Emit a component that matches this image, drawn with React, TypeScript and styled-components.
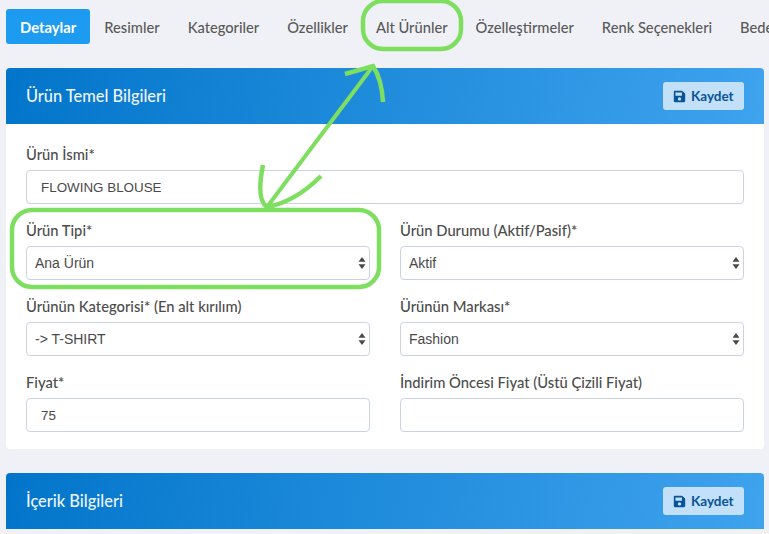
import React from 'react';
import styled, { createGlobalStyle } from 'styled-components';
import { FaSave } from 'react-icons/fa';

const GlobalStyle = createGlobalStyle`
  html, body {
    margin: 0;
    height: 100%;
    overflow: hidden;
    background: #f0f1f6;
  }
  * {
    box-sizing: border-box;
  }
`;

const Page = styled.div`
  position: relative;
  width: 769px;
  height: 534px;
  overflow: hidden;
  padding: 9px 5px 0 6px;
  font-family: Lato, 'Noto Sans', sans-serif;
  color: #4a4a4a;
`;

const Tabs = styled.nav`
  display: flex;
  height: 35px;
  margin-bottom: 24px;
  white-space: nowrap;
`;

const Tab = styled.div<{ $active?: boolean }>`
  flex-shrink: 0;
  display: flex;
  align-items: center;
  height: 35px;
  padding: 0 14px;
  border-radius: 3px;
  font-size: ${(p) => (p.$active ? 14.8 : 14.7)}px;
  font-weight: ${(p) => (p.$active ? 700 : 500)};
  color: ${(p) => (p.$active ? '#fff' : '#595959')};
  background: ${(p) => (p.$active ? '#1d9bf0' : 'transparent')};
`;

const Card = styled.section`
  background: #fff;
  border-radius: 4px;
  margin-bottom: 24px;
`;

const CardHeader = styled.header`
  display: flex;
  align-items: center;
  justify-content: space-between;
  height: 56px;
  padding: 0 20px;
  border-radius: 4px 4px 0 0;
  background: linear-gradient(100deg, #0275ca 0%, #3fa3ee 100%);
`;

const CardTitle = styled.h2`
  margin: -2px 0 0;
  font-size: 16.4px;
  font-weight: 500;
  color: #eef6fd;
`;

const SaveButton = styled.button`
  display: flex;
  align-items: center;
  gap: 5px;
  width: 81px;
  height: 28px;
  padding: 0 10px;
  border: 0;
  border-radius: 3px;
  background: #c3e0f9;
  color: #08549a;
  font-family: inherit;
  font-size: 13.5px;
  font-weight: 700;
`;

const Form = styled.div`
  display: grid;
  grid-template-columns: 344px 344px;
  column-gap: 30px;
  row-gap: 20px;
  padding: 24px 20px 17px;
`;

const Field = styled.div<{ $wide?: boolean }>`
  grid-column: ${(p) => (p.$wide ? '1 / -1' : 'auto')};
`;

const FieldLabel = styled.label`
  display: block;
  height: 22px;
  line-height: 12px;
  font-size: 14.75px;
  font-weight: 500;
  color: #4c4c4c;
  white-space: nowrap;
`;

const SelectBox = styled.div`
  display: flex;
  align-items: center;
  justify-content: space-between;
  height: 34px;
  padding: 0 3px 0 8px;
  border: 1px solid #ccd2e0;
  border-radius: 4px;
  background: #fff;
  font-family: 'Liberation Sans', Arial, sans-serif;
  font-size: 14px;
  color: #4a4a4a;
`;

const TextBox = styled(SelectBox)`
  padding: 1px 3px 0 14px;
  font-size: 13.4px;
`;

const Overlay = styled.svg`
  position: absolute;
  top: 0;
  left: 0;
  pointer-events: none;
`;

const SelectArrows = () => (
  <svg width="8" height="12" viewBox="0 0 8 12" fill="#4a4a4a">
    <path d="M4 0 L7.5 4.8 H0.5 Z" />
    <path d="M4 12 L7.5 7.2 H0.5 Z" />
  </svg>
);

const tabNames = ['Resimler', 'Kategoriler', 'Özellikler', 'Alt Ürünler', 'Özelleştirmeler', 'Renk Seçenekleri', 'Beden'];

const App = () => {
  return (
    <Page>
      <GlobalStyle />
      <Tabs>
        <Tab $active>Detaylar</Tab>
        {tabNames.map((name) => (
          <Tab key={name}>{name}</Tab>
        ))}
      </Tabs>

      <Card>
        <CardHeader>
          <CardTitle>Ürün Temel Bilgileri</CardTitle>
          <SaveButton>
            <FaSave size={13} />
            Kaydet
          </SaveButton>
        </CardHeader>
        <Form>
          <Field $wide>
            <FieldLabel>Ürün İsmi*</FieldLabel>
            <TextBox>FLOWING BLOUSE</TextBox>
          </Field>
          <Field>
            <FieldLabel>Ürün Tipi*</FieldLabel>
            <SelectBox>
              Ana Ürün
              <SelectArrows />
            </SelectBox>
          </Field>
          <Field>
            <FieldLabel>Ürün Durumu (Aktif/Pasif)*</FieldLabel>
            <SelectBox>
              Aktif
              <SelectArrows />
            </SelectBox>
          </Field>
          <Field>
            <FieldLabel>Ürünün Kategorisi* (En alt kırılım)</FieldLabel>
            <SelectBox>
              -&gt; T-SHIRT
              <SelectArrows />
            </SelectBox>
          </Field>
          <Field>
            <FieldLabel>Ürünün Markası*</FieldLabel>
            <SelectBox>
              Fashion
              <SelectArrows />
            </SelectBox>
          </Field>
          <Field>
            <FieldLabel>Fiyat*</FieldLabel>
            <TextBox>75</TextBox>
          </Field>
          <Field>
            <FieldLabel>İndirim Öncesi Fiyat (Üstü Çizili Fiyat)</FieldLabel>
            <TextBox />
          </Field>
        </Form>
      </Card>

      <Card>
        <CardHeader>
          <CardTitle>İçerik Bilgileri</CardTitle>
          <SaveButton>
            <FaSave size={13} />
            Kaydet
          </SaveButton>
        </CardHeader>
      </Card>

      <Overlay width="769" height="534" viewBox="0 0 769 534" fill="none" stroke="#7ede5f" strokeWidth="4.5" strokeLinecap="butt">
        <rect x="363" y="1" width="98" height="48" rx="20" />
        <rect x="12" y="210" width="367" height="77" rx="20" />
        <path d="M373 66 L267 207" strokeWidth="4" />
        <path d="M345 74 L373 66 Q382 80 383 102" />
        <path d="M263 165 Q256 200 267 207 Q295 202 321 176" />
      </Overlay>
    </Page>
  );
};

export default App;
